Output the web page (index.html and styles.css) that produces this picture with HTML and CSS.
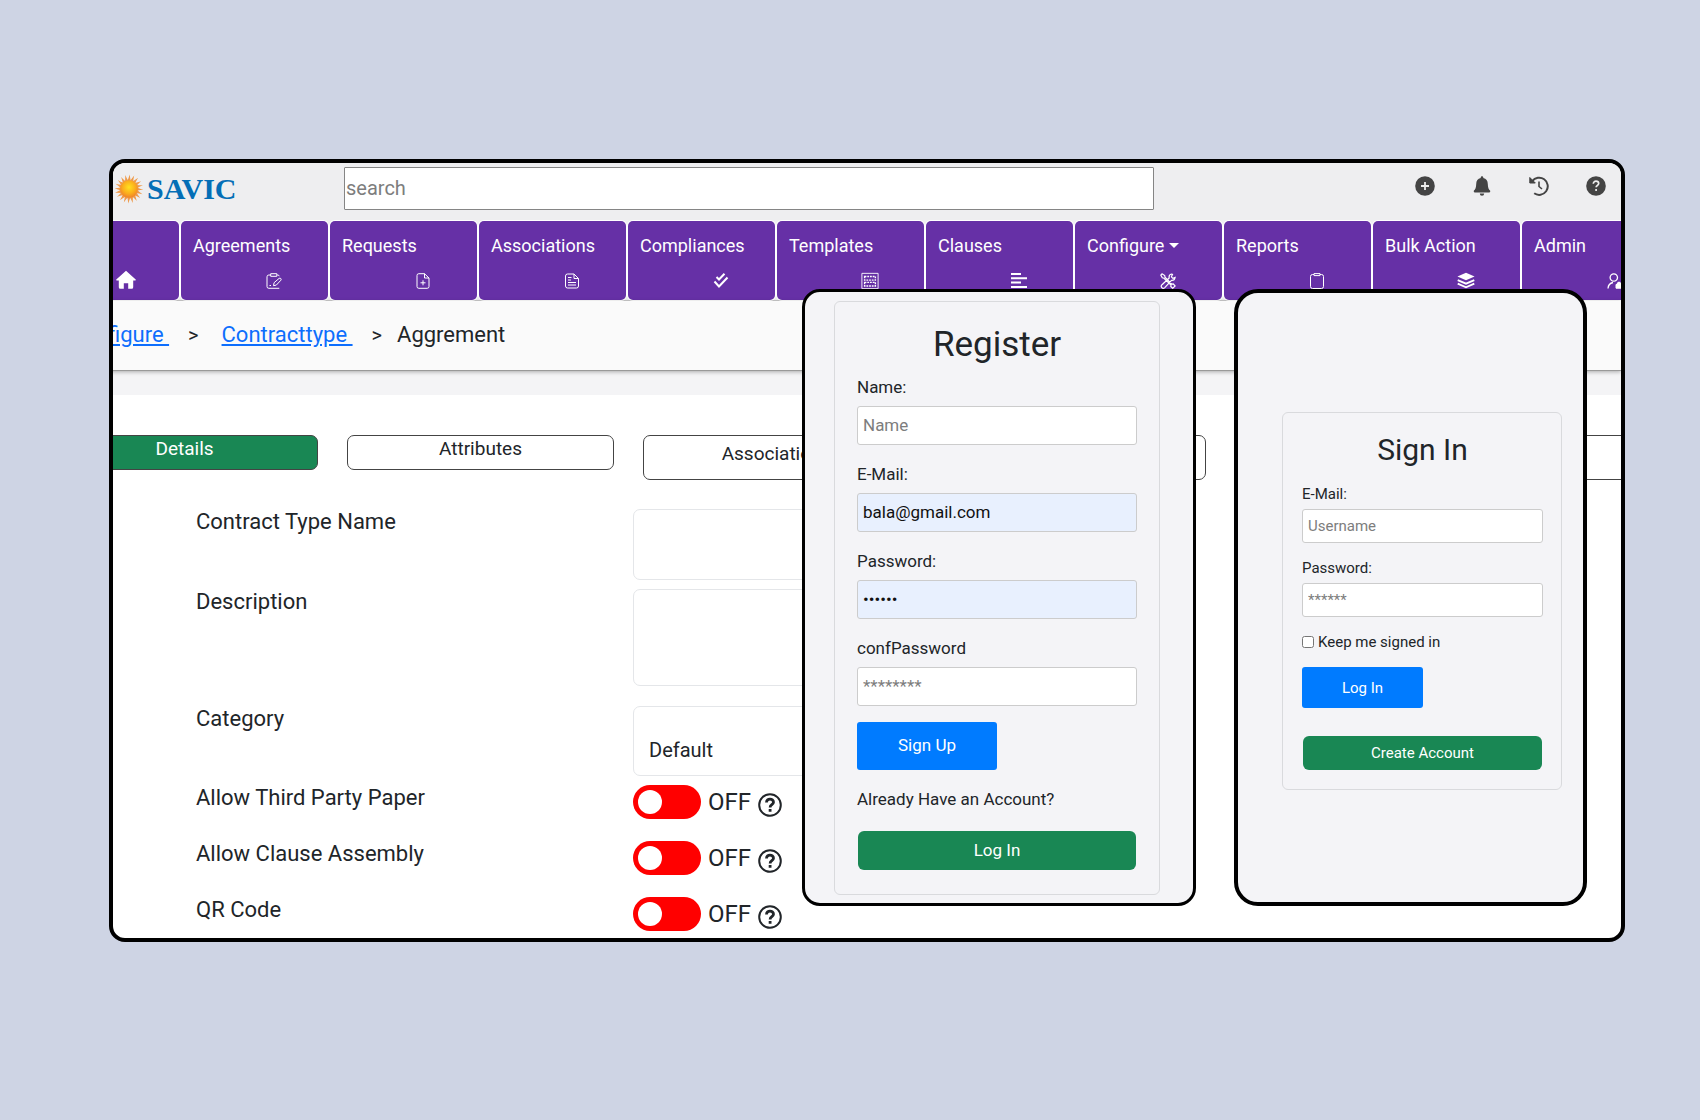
FILE: index.html
```html
<!DOCTYPE html>
<html lang="en">
<head>
<meta charset="utf-8">
<title>SAVIC</title>
<link rel="stylesheet" href="styles.css">
</head>
<body>
<main class="frame">
  <header class="topbar">
    <a class="logo" href="#">
      <svg class="sun" viewBox="-15 -15 30 30" aria-hidden="true">
        <defs>
          <radialGradient id="core" cx="0.5" cy="0.4" r="0.6"><stop offset="0" stop-color="#ffe11f"/><stop offset="0.6" stop-color="#fbae1d"/><stop offset="1" stop-color="#f0822a"/></radialGradient>
          <path id="ray" d="M-1.6-8Q-.4-11 .8-14.4Q1-11 1.8-8Z"/>
          <g id="rays"><use href="#ray"/><use href="#ray" transform="rotate(90)"/><use href="#ray" transform="rotate(180)"/><use href="#ray" transform="rotate(270)"/></g>
        </defs>
        <g fill="#ee9a4a"><use href="#rays"/><use href="#rays" transform="rotate(18)"/><use href="#rays" transform="rotate(36)"/><use href="#rays" transform="rotate(54)"/><use href="#rays" transform="rotate(72)"/></g>
        <circle r="8.8" fill="url(#core)"/>
      </svg>
      <span>SAVIC</span>
    </a>
    <input class="search" type="search" placeholder="search" aria-label="search">
    <div class="actions">
      <a href="#"><svg viewBox="0 0 20 20"><circle cx="10" cy="10" r="9.8" fill="#444"/><path d="M10 6v8M6 10h8" stroke="#eee" stroke-width="1.8"/></svg></a>
      <a href="#"><svg viewBox="0 0 20 20" fill="#444"><path d="M10 .2a1.3 1.3 0 0 0-1.3 1.3v.6C5.800 2.700 4.200 5 4.200 8c0 4-1.200 5.500-2.200 6.600-.6.800-.1 1.800.8 1.800h14.400c.9 0 1.400-1 .8-1.800-1-1.100-2.200-2.600-2.200-6.600 0-3-1.600-5.300-4.500-5.900v-.6A1.300 1.300 0 0 0 10 .2zM7.800 17.500a2.200 2.200 0 0 0 4.400 0z"/></svg></a>
      <a href="#"><svg viewBox="0 0 20 20" fill="none" stroke="#444" stroke-width="2"><path d="M3.200 5.200A8.600 8.600 0 1 1 5.200 17.300"/><path d="M10 5.500v5l3 2.500" stroke-width="1.600"/><path d="M.8 1.500v5.500h5.500z" fill="#444" stroke-width="1"/></svg></a>
      <a href="#"><svg viewBox="0 0 20 20"><circle cx="10" cy="10" r="9.800" fill="#444"/><path d="M7.300 7.800c0-3.600 5.400-3.300 5.400-.2 0 1.900-2.600 1.900-2.600 3.700M10.100 13v2" stroke="#eee" stroke-width="1.700" fill="none"/></svg></a>
    </div>
  </header>

  <nav class="tiles">
    <a class="tile" href="#"><span></span><svg class="big" viewBox="0 0 20 20" fill="#fff"><path d="M10 .8.300 9.600q-.5.900.5 1h2v6.700q0 1.500 1.500 1.500h3.500v-5.600h4.400v5.600h3.500q1.500 0 1.500-1.500v-6.700h2q1-.1.500-1z"/></svg></a>
    <a class="tile" href="#"><span>Agreements</span><svg viewBox="0 0 16 16"><path d="M4.500 2H2.800q-1.800 0-1.800 1.800v9.700q0 1.800 1.800 1.800h10.500M11 2h.8q1.200 0 1.400 1.200M4.700.7h6.100v2.600H4.700zM7.500 12.700l.6-3 5-4.300q1-.6 1.700.1t.1 1.700l-4.600 4.900zM3.500 12.500h1.500"/></svg></a>
    <a class="tile" href="#"><span>Requests</span><svg viewBox="0 0 16 16"><path d="M9.500.7H3.800Q2 .7 2 2.500v11q0 1.800 1.800 1.800h8.400q1.800 0 1.800-1.800V5zV5H14M8 7.300v5M5.500 9.800h5"/></svg></a>
    <a class="tile" href="#"><span>Associations</span><svg viewBox="0 0 16 16"><path d="M10 1H3.500Q1.500 1 1.500 3v10q0 2 2 2h9q2 0 2-2V5.500zV5.500h4.500M4 4.500h3.500M4 7h3M4 9.500h8M4 12h8"/></svg></a>
    <a class="tile" href="#"><span>Compliances</span><svg viewBox="0 0 16 16"><path stroke-width="2" d="M3.500 4 6 6.500 11.500.8M1.500 8.500l4.500 5 8.500-9"/></svg></a>
    <a class="tile" href="#"><span>Templates</span><svg class="big" viewBox="0 0 20 20"><path d="M1 1.500h18v17H1z"/><path stroke-width="1.500" stroke-dasharray="2 1" d="M4 5h12v4H4zM4 11.500h12v4H4z"/></svg></a>
    <a class="tile" href="#"><span>Clauses</span><svg viewBox="0 0 16 16"><path stroke-width="2" d="M0 1h10M0 5.300h16M0 9.600h10M0 14h16"/></svg></a>
    <a class="tile" href="#"><span>Configure<i class="caret"></i></span><svg viewBox="0 0 16 16"><path stroke-width="1.200" d="M2 .8.800 2l1.500 2.800 1.700.4 7 6.800-.2 1.500 1.900 1.800 2.400-2.400-1.800-1.900-1.500.2L5 4.200 4.700 2.500zM11.500 1q-3 .8-2.300 4L2 11.700q-1.500 1.500-.2 2.900t3 0L11.500 7.400q3 .4 3.600-3l-2.200.9-1.500-1.500 1.100-2.500z"/></svg></a>
    <a class="tile" href="#"><span>Reports</span><svg viewBox="0 0 16 16"><path d="M5 1.500H3.500q-2 0-2 2V13.500q0 2 2 2h9q2 0 2-2V3.500q0-2-2-2H11M5 .6h6v2H5z"/></svg></a>
    <a class="tile" href="#"><span>Bulk Action</span><svg class="big" viewBox="0 0 20 20"><path fill="#fff" stroke="none" d="M10 .8 19.500 5 10 9.200.5 5z"/><path stroke-width="2" d="M.8 9 10 13l9.200-4M.8 13 10 17l9.200-4"/></svg></a>
    <a class="tile" href="#"><span>Admin</span><svg viewBox="0 0 16 16"><path stroke-width="1.300" d="M6.800.8a3.700 3.700 0 1 1 0 7.400a3.700 3.700 0 1 1 0-7.400M1 15.500q.3-5 5-6"/><path fill="#fff" d="M9 11.500h6v3.700H9zM10.300 11v-1q1.700-2 3.400 0v1z"/></svg></a>
  </nav>

  <div class="crumbs">
    <a href="#">Configure&nbsp;</a><span class="sep">&gt;</span><a href="#">Contracttype&nbsp;</a><span class="sep last">&gt;</span><span>Aggrement</span>
  </div>

  <section class="panel">
    <div class="tabs">
      <button class="tab active" type="button">Details</button>
      <button class="tab" type="button">Attributes</button>
      <button class="tab tall" type="button">Associations</button>
      <button class="tab tall" type="button"></button>
      <button class="tab tall" type="button"></button>
      <button class="tab tall" type="button"></button>
    </div>
    <form class="form">
      <label for="ctname">Contract Type Name</label>
      <input class="field" id="ctname" type="text">
      <label for="desc">Description</label>
      <textarea class="field area" id="desc"></textarea>
      <label for="cat">Category</label>
      <select class="field" id="cat"><option>Default</option></select>
      <label for="third">Allow Third Party Paper</label>
      <div class="switch"><input type="checkbox" id="third"><span>OFF</span><svg viewBox="0 0 24 24"><use href="#help"/></svg></div>
      <label for="clause">Allow Clause Assembly</label>
      <div class="switch"><input type="checkbox" id="clause"><span>OFF</span><svg viewBox="0 0 24 24"><use href="#help"/></svg></div>
      <label for="qr">QR Code</label>
      <div class="switch"><input type="checkbox" id="qr"><span>OFF</span><svg viewBox="0 0 24 24"><g id="help" fill="none" stroke="#212529" stroke-width="2"><circle cx="12" cy="12" r="10.800"/><path stroke-width="2.800" d="M8.500 9.500c0-4.800 7-4.300 7-.3 0 2.500-3.400 2.500-3.400 5.200M12.100 16v2.800"/></g></svg></div>
    </form>
  </section>

  <section class="device register">
    <form class="card">
      <h1>Register</h1>
      <label for="r-name">Name:</label>
      <input id="r-name" type="text" placeholder="Name">
      <label for="r-mail">E-Mail:</label>
      <input class="filled" id="r-mail" type="email" value="bala@gmail.com">
      <label for="r-pass">Password:</label>
      <input class="filled" id="r-pass" type="password" value="123456">
      <label for="r-conf">confPassword</label>
      <input id="r-conf" type="password" placeholder="********">
      <button class="primary" type="button">Sign Up</button>
      <p>Already Have an Account?</p>
      <button class="success" type="button">Log In</button>
    </form>
  </section>

  <section class="device signin">
    <form class="card">
      <h1>Sign In</h1>
      <label for="s-mail">E-Mail:</label>
      <input id="s-mail" type="text" placeholder="Username">
      <label for="s-pass">Password:</label>
      <input id="s-pass" type="password" placeholder="******">
      <div class="keep"><input type="checkbox" id="keep"><label for="keep">Keep me signed in</label></div>
      <button class="primary" type="button">Log In</button>
      <button class="success" type="button">Create Account</button>
    </form>
  </section>
</main>
</body>
</html>
```
FILE: styles.css
```css
* { box-sizing: border-box; }

body {
  margin: 0;
  padding: 159px 75px 179px 109px;
  background: #ced4e4;
  color: #212529;
  font-family: Roboto, "Liberation Sans", sans-serif;
  font-size: 22px;
}

input, textarea, select, button { font-family: inherit; color: inherit; margin: 0; }

.frame {
  position: relative;
  overflow: hidden;
  border: 4px solid #000;
  border-radius: 16px;
  background: #fff;
}

/* Top bar */
.topbar {
  display: flex;
  align-items: flex-start;
  height: 58px;
  padding: 4px 15px 0 1px;
  background: #eeeef0;
}

.logo {
  display: flex;
  align-items: center;
  gap: 3px;
  width: 230px;
  height: 44px;
  color: #046eb6;
  font: bold 30px "Liberation Serif", serif;
  text-decoration: none;
}

.sun { width: 30px; height: 30px; }

.search {
  width: 810px;
  height: 43px;
  padding: 0 1px 2px;
  border: 1px solid #858585;
  border-radius: 1px;
  background: #fff;
  font-size: 20px;
}

::placeholder { color: #7d7d7d; opacity: 1; }

.actions { display: flex; gap: 37px; margin-left: auto; padding-top: 9px; }
.actions svg { display: block; width: 20px; height: 20px; }

/* Navigation tiles */
.tiles {
  display: flex;
  gap: 2px;
  height: 80px;
  margin-left: -81px;
  background: #eeeef0;
  border-bottom: 1px solid #ccc;
}

.tile {
  flex: none;
  display: flex;
  flex-direction: column;
  width: 147px;
  padding: 12px 12px 0;
  border-radius: 5px;
  background: #6630a6;
  box-shadow: 0 0 0 1px #fff;
  color: #fff;
  font-size: 18px;
  line-height: 26px;
  text-decoration: none;
}

.tile span { height: 26px; }
.tile svg { width: 16px; height: 16px; margin: 14px 0 0 73px; fill: none; stroke: #fff; stroke-width: 1; }
.tile .big { width: 18px; height: 18px; margin: 13px 0 0 72px; }
.tile:first-child svg { width: 20px; height: 20px; margin-top: 11px; fill: #fff; stroke: none; }

.caret {
  display: inline-block;
  margin-left: 5px;
  border: 5px solid transparent;
  border-top-color: #fff;
  border-bottom: 0;
  vertical-align: 4px;
}

/* Breadcrumbs */
.crumbs {
  position: relative;
  display: flex;
  align-items: center;
  height: 70px;
  margin-left: -44px;
  padding-bottom: 2px;
  background: #fafafa;
  border-bottom: 1px solid #999;
  box-shadow: 0 1px 4px rgba(0, 0, 0, 0.3);
  white-space: nowrap;
}

.crumbs a { color: #0d6efd; }
.sep { margin: 0 23px 0 19px; font-size: 20px; }
.sep.last { margin-right: 15px; }

/* Main panel */
.panel { border-top: 24px solid #f4f4f6; padding: 40px 0 7px; }

.tabs { display: flex; align-items: flex-start; gap: 29px; margin-left: -62px; }

.tab {
  flex: none;
  width: 267px;
  height: 35px;
  padding: 0 0 9px;
  border: 1px solid #444;
  border-radius: 7px;
  background: #fff;
  font-size: 19px;
}

.tab.tall { height: 45px; }
.tab.active { background: #198754; color: #fff; }

.form {
  display: grid;
  grid-template-columns: 437px 400px;
  align-items: start;
  padding: 29px 0 0 83px;
  line-height: 26px;
}

.field {
  width: 100%;
  height: 71px;
  margin-bottom: 9px;
  padding: 8px 15px;
  border: 1px solid #e4e6e9;
  border-radius: 7px;
  background: #fff;
  font-size: 20px;
}

.area { height: 97px; margin-bottom: 20px; resize: none; }
select.field { appearance: none; height: 70px; padding-top: 26px; }

.switch { display: flex; align-items: center; height: 34px; margin-bottom: 22px; font-size: 24px; }
.switch:last-child { margin-bottom: 0; }

.switch input {
  appearance: none;
  display: flex;
  align-items: center;
  width: 68px;
  height: 34px;
  padding: 0 5px;
  border-radius: 17px;
  background: #f00;
}

.switch input::before { content: ""; width: 24px; height: 24px; border-radius: 50%; background: #fff; }
.switch span { margin: 0 7px; }
.switch svg { width: 24px; height: 24px; margin-top: 6px; }

/* Overlaid device windows */
.device { position: absolute; top: 126px; height: 617px; border: 3px solid #000; background: #f4f4f7; }

.card {
  display: flex;
  flex-direction: column;
  border: 1px solid #d9dadd;
  border-radius: 6px;
  line-height: 20px;
}

.card h1 { margin: 0; font-weight: 400; text-align: center; }
.card p { margin: 0; }

.card > input {
  padding: 0 6px;
  border: 1px solid #ccc;
  border-radius: 3px;
  background: #fff;
}

.card > .filled { background: #e8f0fe; color: #111; }
.card button { padding: 0; border: 0; color: #fff; }
.card .primary { align-self: flex-start; border-radius: 3px; background: #007bff; }
.card .success { margin: 0 1px; border-radius: 6px; background: #198754; }

.register { left: 689px; width: 394px; padding: 9px 33px 0 29px; border-radius: 18px; }
.register .card { height: 594px; padding: 22px 22px 0; font-size: 17px; }
.register h1 { margin-bottom: 12px; font-size: 35px; line-height: 41px; }
.register .card > input { height: 39px; margin: 9px 0 19px; padding: 0 5px 2px; font-size: 17px; }
.register button { padding-bottom: 2px; font-size: 17px; }
.register .card > #r-conf { margin-bottom: 16px; }
.register .primary { width: 140px; height: 48px; }
.register p { margin: 19px 0 22px; }
.register .success { height: 39px; }

.signin { left: 1121px; width: 353px; padding: 119px 21px 0 44px; border-width: 4px; border-radius: 24px; }
.signin .card { height: 378px; padding: 19px 18px 0 19px; font-size: 15px; }
.signin h1 { margin-bottom: 16px; font-size: 30px; line-height: 36px; }
.signin .card > input { height: 34px; margin: 5px 0 15px; padding: 0 5px; font-size: 15px; }
.signin button { font-size: 15px; }
.keep { display: flex; align-items: center; gap: 4px; }
.keep input { width: 12px; height: 12px; }
.signin .primary { width: 121px; height: 41px; margin: 15px 0 28px; }
.signin .success { height: 34px; }
```
